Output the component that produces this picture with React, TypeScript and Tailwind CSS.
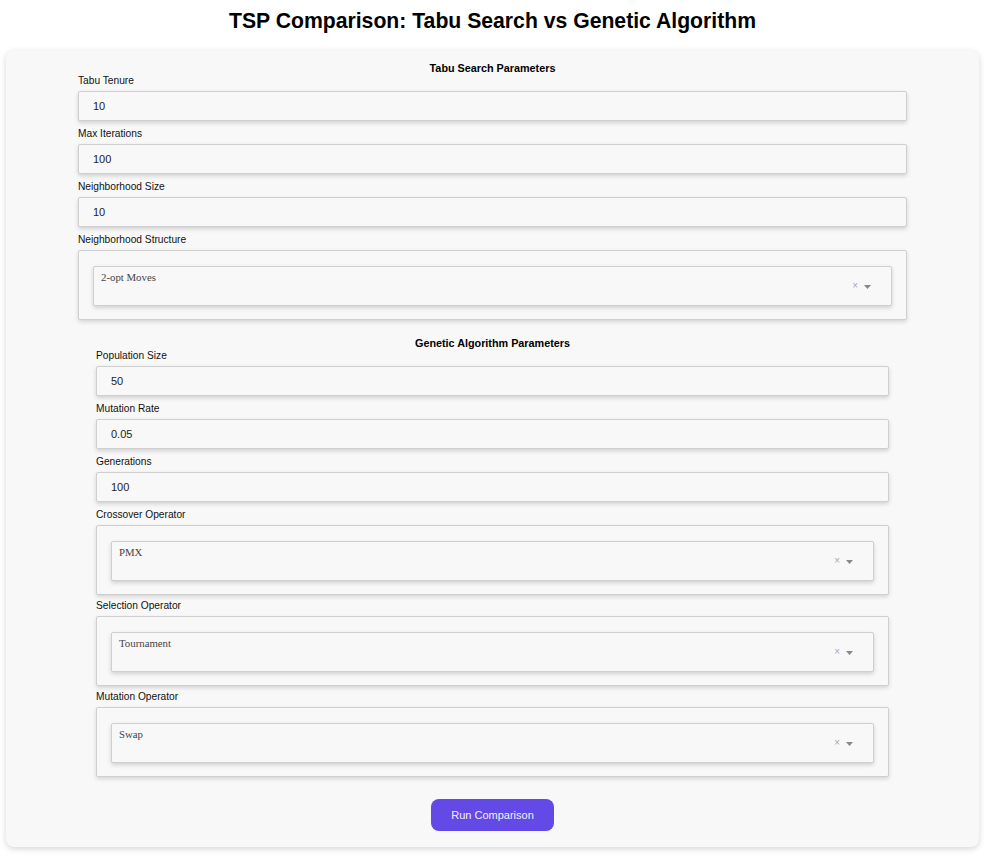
import React from 'react';

const sans = { fontFamily: '"Liberation Sans", Arial, sans-serif' };
const serif = { fontFamily: '"Liberation Serif", "Times New Roman", serif' };

const NumberField = ({ label, value }: { label: string; value: string }) => (
  <div className="mb-[6px]">
    <label className="block h-[13px] text-[10.2px] leading-[13px] text-[#111] mb-[4px]">{label}</label>
    <div className="h-[30px] flex items-center pl-[14px] bg-[#f8f8f8] border border-[#cfcfcf] rounded-[2px] shadow-[0_2px_4px_rgba(0,0,0,0.16)] text-[11px] text-[#222]">
      {value}
    </div>
  </div>
);

const SelectField = ({ label, value, last }: { label: string; value: string; last?: boolean }) => (
  <div className={last ? '' : 'mb-[4px]'}>
    <label className="block h-[13px] text-[10.2px] leading-[13px] text-[#111] mb-[4px]">{label}</label>
    <div className="h-[70px] px-[14px] pt-[15px] bg-[#f8f8f8] border border-[#cfcfcf] rounded-[2px] shadow-[0_2px_4px_rgba(0,0,0,0.14)]">
      <div className="h-[40px] flex justify-between bg-[#f8f8f8] border border-[#cfcfcf] rounded-[2px] shadow-[0_2px_4px_rgba(0,0,0,0.16)]">
        <span className="pl-[7px] pt-[3px] text-[10.8px] leading-[14px] text-[#444]" style={serif}>{value}</span>
        <div className="flex items-center pr-[20px] gap-[6px] text-[#aaa]">
          <span className="text-[10px] leading-none">×</span>
          <svg width="7" height="4" viewBox="0 0 7 4" className="mt-[2px]">
            <path d="M0 0h7L3.5 4z" fill="#888" />
          </svg>
        </div>
      </div>
    </div>
  </div>
);

export default function App() {
  return (
    <div className="min-h-[856px] bg-white" style={sans}>
      <div className="w-[973px] ml-[6px]">
        <h1 className="pt-[8px] text-center text-[21.2px] font-bold leading-[25px] text-black">
          TSP Comparison: Tabu Search vs Genetic Algorithm
        </h1>

        <div className="mt-[17px] bg-[#f8f8f8] rounded-[8px] shadow-[0_2px_6px_rgba(0,0,0,0.16)] pt-[12px] pb-[16px]">
          {/* Tabu Search */}
          <div className="w-[829px] mx-auto">
            <h3 className="h-[12px] text-center text-[10.8px] font-bold leading-[12px] text-black">Tabu Search Parameters</h3>
            <NumberField label="Tabu Tenure" value="10" />
            <NumberField label="Max Iterations" value="100" />
            <NumberField label="Neighborhood Size" value="10" />
            <SelectField label="Neighborhood Structure" value="2-opt Moves" last />
          </div>

          {/* Genetic Algorithm */}
          <div className="w-[793px] mx-auto mt-[17px]">
            <h3 className="h-[12px] text-center text-[10.8px] font-bold leading-[12px] text-black">Genetic Algorithm Parameters</h3>
            <NumberField label="Population Size" value="50" />
            <NumberField label="Mutation Rate" value="0.05" />
            <NumberField label="Generations" value="100" />
            <SelectField label="Crossover Operator" value="PMX" />
            <SelectField label="Selection Operator" value="Tournament" />
            <SelectField label="Mutation Operator" value="Swap" last />
          </div>

          <div className="flex justify-center mt-[22px]">
            <button className="w-[123px] h-[32px] rounded-[8px] bg-[#6349e6] text-[11px] text-[#f4f0ff]">
              Run Comparison
            </button>
          </div>
        </div>
      </div>
    </div>
  );
}
